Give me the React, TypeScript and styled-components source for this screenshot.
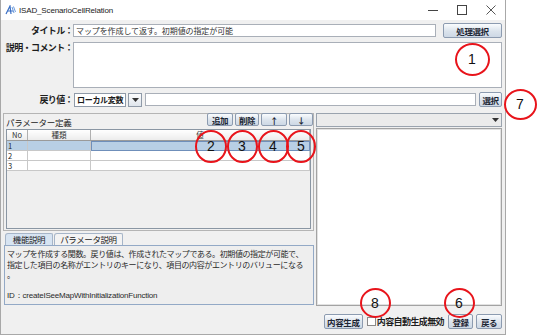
import React from 'react';
import styled, { createGlobalStyle } from 'styled-components';

const GlobalStyle = createGlobalStyle`
  html, body {
    margin: 0;
    padding: 0;
    background: #ffffff;
  }
  body {
    width: 538px;
    height: 336px;
    overflow: hidden;
    font-family: "Noto Sans CJK JP", "Noto Sans", sans-serif;
    color: #1a1a1a;
  }
`;

const Screen = styled.div`
  position: relative;
  width: 538px;
  height: 336px;
  background: #ffffff;
  overflow: hidden;
`;

const Window = styled.div`
  width: 506px;
  height: 335px;
  box-sizing: border-box;
  border: 1px solid #a8a8a8;
  border-top: none;
  background: #f0f0f0;
  display: flex;
  flex-direction: column;
`;

const TitleBar = styled.div`
  height: 20px;
  flex: none;
  background: #ffffff;
  display: flex;
  align-items: center;
  padding-left: 4px;
`;

const TitleText = styled.span`
  margin-left: 3px;
  font-family: "Liberation Sans", Arial, sans-serif;
  font-size: 8px;
  letter-spacing: -0.15px;
  color: #222;
`;

const Controls = styled.div`
  margin-left: auto;
  display: flex;
  height: 20px;
`;

const ControlBox = styled.div`
  width: 29px;
  height: 20px;
  display: flex;
  align-items: center;
  justify-content: center;
`;

const Body = styled.div`
  flex: 1;
  display: flex;
  flex-direction: column;
  padding: 3px 3px 0 2px;
`;

const FieldRow = styled.div<{ $h: number; $top: number }>`
  display: flex;
  align-items: center;
  height: ${({ $h }) => $h}px;
  margin-top: ${({ $top }) => $top}px;
  flex: none;
`;

const Label = styled.div<{ $alignTop?: boolean }>`
  width: 70px;
  flex: none;
  text-align: right;
  font-size: 9px;
  font-weight: bold;
  letter-spacing: -0.6px;
  line-height: 11px;
  align-self: ${({ $alignTop }) => ($alignTop ? 'flex-start' : 'center')};
  color: #1e1e1e;
  white-space: nowrap;
`;

const TextInput = styled.div<{ $ml?: number }>`
  flex: 1;
  height: 13px;
  margin-left: ${({ $ml }) => $ml ?? 0}px;
  box-sizing: border-box;
  border: 1px solid #a9afb8;
  background: #ffffff;
  font-size: 8px;
  line-height: 11px;
  padding-left: 2px;
  letter-spacing: -0.1px;
  white-space: nowrap;
  overflow: hidden;
  color: #333;
`;

const TextArea = styled.div`
  flex: 1;
  height: 46px;
  box-sizing: border-box;
  border: 1px solid #a9afb8;
  background: #ffffff;
`;

const Button = styled.div<{ $w: number; $ml?: number }>`
  width: ${({ $w }) => $w}px;
  height: 15px;
  margin-left: ${({ $ml }) => $ml ?? 0}px;
  flex: none;
  box-sizing: border-box;
  border: 1px solid #8c9bb0;
  border-radius: 2px;
  background: linear-gradient(#fafcfe, #dbe3ec 55%, #cdd8e5);
  display: flex;
  align-items: center;
  justify-content: center;
  font-size: 8.5px;
  font-weight: bold;
  letter-spacing: -0.4px;
  color: #1c2533;
  white-space: nowrap;
`;

const Combo = styled.div`
  width: 52px;
  height: 14px;
  margin-left: 1px;
  box-sizing: border-box;
  border: 1px solid #8f9aa8;
  background: #ffffff;
  font-size: 8px;
  font-weight: bold;
  line-height: 12px;
  padding-left: 2px;
  letter-spacing: -0.3px;
  white-space: nowrap;
  overflow: hidden;
`;

const ArrowButton = styled.div<{ $ml?: number }>`
  width: 14px;
  height: 14px;
  margin-left: ${({ $ml }) => $ml ?? 0}px;
  flex: none;
  box-sizing: border-box;
  border: 1px solid #8f9aa8;
  background: linear-gradient(#fbfcfd, #dfe5ec);
  display: flex;
  align-items: center;
  justify-content: center;
`;

const FlatArrow = styled.div`
  width: 12px;
  height: 12px;
  display: flex;
  align-items: center;
  justify-content: center;
`;

const Middle = styled.div`
  display: flex;
  gap: 2px;
  height: 193px;
  margin-top: 6px;
  flex: none;
`;

const LeftColumn = styled.div`
  width: 311px;
  flex: none;
  display: flex;
  flex-direction: column;
`;

const Group = styled.div`
  height: 118px;
  box-sizing: border-box;
  border: 1px solid #b4b4b4;
  display: flex;
  flex-direction: column;
`;

const GroupHeader = styled.div`
  height: 14px;
  display: flex;
  align-items: flex-start;
  flex: none;
`;

const GroupTitle = styled.div`
  padding-left: 2px;
  margin-top: 3px;
  font-size: 8.5px;
  line-height: 11px;
  letter-spacing: -0.3px;
  color: #222;
`;

const ToolButtons = styled.div`
  margin-left: auto;
  margin-top: -1px;
  display: flex;
  gap: 2px;
`;

const ToolButton = styled(Button)`
  height: 13px;
`;

const TableFrame = styled.div`
  flex: 1;
  margin: 1px 2px 1px 2px;
  border: 1px solid #8a96a3;
  background: #efefef;
`;

const Grid = styled.table`
  width: 100%;
  border-collapse: collapse;
  table-layout: fixed;
  font-size: 7.5px;
`;

const HeadCell = styled.th<{ $w?: number }>`
  width: ${({ $w }) => ($w ? `${$w}px` : 'auto')};
  height: 10px;
  padding: 0;
  font-weight: normal;
  line-height: 10px;
  color: #333;
  background: linear-gradient(#ffffff, #ececec);
  border-right: 1px solid #b0b0b0;
  border-bottom: 1px solid #9a9a9a;
  text-align: center;
  overflow: hidden;
`;

const Cell = styled.td<{ $sel?: boolean; $focus?: boolean }>`
  height: 9px;
  padding: 0 0 0 1px;
  line-height: 9px;
  overflow: hidden;
  background: ${({ $sel }) => ($sel ? '#b8cfe5' : '#ffffff')};
  border-right: 1px solid #c8c8c8;
  border-bottom: 1px solid #c8c8c8;
  outline: ${({ $focus }) => ($focus ? '1px solid #6f8fba' : 'none')};
  outline-offset: -1px;
  color: #222;
`;

const CellText = styled.div`
  height: 9px;
  line-height: 9px;
  overflow: hidden;
`;

const Tabs = styled.div`
  margin-top: 2px;
  margin-left: 1px;
  height: 72px;
  display: flex;
  flex-direction: column;
`;

const TabRow = styled.div`
  height: 12px;
  display: flex;
  align-items: flex-end;
  padding-left: 1px;
  gap: 1px;
`;

const Tab = styled.div<{ $active?: boolean; $w: number }>`
  width: ${({ $w }) => $w}px;
  height: 12px;
  box-sizing: border-box;
  border: 1px solid #a6b5c8;
  border-bottom: none;
  border-radius: 3px 2px 0 0;
  background: ${({ $active }) => ($active ? '#d7e4f2' : '#f3f3f3')};
  font-size: 8.5px;
  line-height: 11px;
  text-align: center;
  letter-spacing: -0.4px;
  color: #222;
  white-space: nowrap;
`;

const TabContent = styled.div`
  flex: 1;
  box-sizing: border-box;
  border: 1px solid #93a9c6;
  background: #eeeeee;
  padding: 3px 0 0 2px;
  font-size: 8px;
  line-height: 10.5px;
  letter-spacing: -0.4px;
  color: #2a2a2a;
  white-space: nowrap;
  overflow: hidden;
`;

const IdLine = styled.div`
  margin-top: 10px;
  font-family: "Liberation Sans", Arial, sans-serif;
  letter-spacing: -0.2px;
`;

const RightColumn = styled.div`
  flex: 1;
  display: flex;
  flex-direction: column;
`;

const WideCombo = styled.div`
  height: 14px;
  box-sizing: border-box;
  border: 1px solid #9aa3ae;
  background: #ebebeb;
  display: flex;
  justify-content: flex-end;
  flex: none;
`;

const ListBox = styled.div`
  flex: 1;
  margin-top: 1px;
  box-sizing: border-box;
  border: 1px solid #a3a3a3;
  box-shadow: inset 0 0 0 1px #e2e2e2;
  background: #ffffff;
`;

const BottomBar = styled.div`
  margin-top: 8px;
  height: 15px;
  display: flex;
  justify-content: flex-end;
  align-items: center;
  flex: none;
`;

const CheckLabel = styled.label`
  display: flex;
  align-items: center;
  margin-left: 4px;
  font-size: 9px;
  font-weight: bold;
  letter-spacing: -0.6px;
  color: #1e1e1e;
  white-space: nowrap;
`;

const CheckBox = styled.span`
  width: 9px;
  height: 9px;
  box-sizing: border-box;
  border: 1px solid #8a8a8a;
  background: #ffffff;
  margin-right: 1px;
`;

const Marker = styled.div<{ $x: number; $y: number; $w: number; $h: number }>`
  position: absolute;
  left: ${({ $x, $w }) => $x - $w / 2}px;
  top: ${({ $y, $h }) => $y - $h / 2}px;
  width: ${({ $w }) => $w}px;
  height: ${({ $h }) => $h}px;
  box-sizing: border-box;
  border: 2px solid #e8141b;
  border-radius: 50%;
  display: flex;
  align-items: center;
  justify-content: center;
  font-family: "Liberation Sans", Arial, sans-serif;
  font-size: 14px;
  color: #111;
`;

const Arrow = () => (
  <svg width="7" height="4" viewBox="0 0 7 4">
    <path d="M0 0 H7 L3.5 4 Z" fill="#333" />
  </svg>
);

const AppIcon = () => (
  <svg width="11" height="10" viewBox="0 0 11 10">
    <path d="M1 9 L5 1 L6 9" stroke="#3a6fc4" strokeWidth="1.2" fill="none" />
    <path d="M3 6 H8" stroke="#3a6fc4" strokeWidth="1" />
    <path d="M7 2 L9 8 M8.5 1.5 L10.5 7" stroke="#5a8fd8" strokeWidth="0.9" />
  </svg>
);

const rows = ['1', '2', '3'];

const markers = [
  { n: '1', x: 472, y: 59, w: 35, h: 33 },
  { n: '2', x: 211, y: 146, w: 32, h: 33 },
  { n: '3', x: 242, y: 146, w: 31, h: 33 },
  { n: '4', x: 273, y: 146, w: 31, h: 33 },
  { n: '5', x: 301, y: 146, w: 30, h: 33 },
  { n: '7', x: 520, y: 104, w: 33, h: 31 },
  { n: '8', x: 375, y: 303, w: 31, h: 30 },
  { n: '6', x: 459, y: 303, w: 31, h: 30 },
];

const App: React.FC = () => {
  return (
    <Screen>
      <GlobalStyle />
      <Window>
        <TitleBar>
          <AppIcon />
          <TitleText>ISAD_ScenarioCellRelation</TitleText>
          <Controls>
            <ControlBox>
              <svg width="10" height="10" viewBox="0 0 10 10">
                <path d="M0 5.5 H10" stroke="#444" strokeWidth="1" />
              </svg>
            </ControlBox>
            <ControlBox>
              <svg width="10" height="10" viewBox="0 0 10 10">
                <rect x="0.5" y="0.5" width="9" height="9" stroke="#444" fill="none" />
              </svg>
            </ControlBox>
            <ControlBox>
              <svg width="10" height="10" viewBox="0 0 10 10">
                <path d="M0.5 0.5 L9.5 9.5 M9.5 0.5 L0.5 9.5" stroke="#444" strokeWidth="0.9" />
              </svg>
            </ControlBox>
          </Controls>
        </TitleBar>

        <Body>
          <FieldRow $h={15} $top={0}>
            <Label>タイトル：</Label>
            <TextInput>マップを作成して返す。初期値の指定が可能</TextInput>
            <Button $w={59} $ml={7}>処理選択</Button>
          </FieldRow>

          <FieldRow $h={46} $top={4}>
            <Label $alignTop>説明・コメント：</Label>
            <TextArea />
          </FieldRow>

          <FieldRow $h={15} $top={4}>
            <Label>戻り値：</Label>
            <Combo>ローカル変数</Combo>
            <ArrowButton $ml={2}>
              <Arrow />
            </ArrowButton>
            <TextInput $ml={3} />
            <Button $w={23} $ml={3}>選択</Button>
          </FieldRow>

          <Middle>
            <LeftColumn>
              <Group>
                <GroupHeader>
                  <GroupTitle>パラメーター定義</GroupTitle>
                  <ToolButtons>
                    <ToolButton $w={26}>追加</ToolButton>
                    <ToolButton $w={24}>削除</ToolButton>
                    <ToolButton $w={26}>↑</ToolButton>
                    <ToolButton $w={24}>↓</ToolButton>
                  </ToolButtons>
                </GroupHeader>
                <TableFrame>
                  <Grid>
                    <thead>
                      <tr>
                        <HeadCell $w={20}>No</HeadCell>
                        <HeadCell $w={62}>種類</HeadCell>
                        <HeadCell>値</HeadCell>
                      </tr>
                    </thead>
                    <tbody>
                      {rows.map((no, i) => (
                        <tr key={no}>
                          <Cell $sel={i === 0}>
                            <CellText>{no}</CellText>
                          </Cell>
                          <Cell $sel={i === 0}>
                            <CellText />
                          </Cell>
                          <Cell $sel={i === 0} $focus={i === 0}>
                            <CellText />
                          </Cell>
                        </tr>
                      ))}
                    </tbody>
                  </Grid>
                </TableFrame>
              </Group>

              <Tabs>
                <TabRow>
                  <Tab $active $w={48}>機能説明</Tab>
                  <Tab $w={69}>パラメータ説明</Tab>
                </TabRow>
                <TabContent>
                  <div>マップを作成する関数。戻り値は、作成されたマップである。初期値の指定が可能で、</div>
                  <div>指定した項目の名称がエントリのキーになり、項目の内容がエントリのバリューになる</div>
                  <div>。</div>
                  <IdLine>ID：createISeeMapWithInitializationFunction</IdLine>
                </TabContent>
              </Tabs>
            </LeftColumn>

            <RightColumn>
              <WideCombo>
                <FlatArrow>
                  <Arrow />
                </FlatArrow>
              </WideCombo>
              <ListBox />
            </RightColumn>
          </Middle>

          <BottomBar>
            <Button $w={39}>内容生成</Button>
            <CheckLabel>
              <CheckBox />
              内容自動生成無効
            </CheckLabel>
            <Button $w={25} $ml={4}>登録</Button>
            <Button $w={26} $ml={3}>戻る</Button>
          </BottomBar>
        </Body>
      </Window>

      {markers.map((m) => (
        <Marker key={m.n} $x={m.x} $y={m.y} $w={m.w} $h={m.h}>
          {m.n}
        </Marker>
      ))}
    </Screen>
  );
};

export default App;
